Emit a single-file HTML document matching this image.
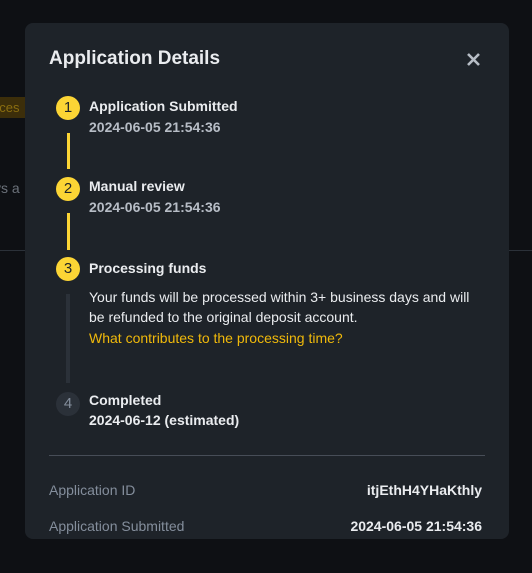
<!DOCTYPE html>
<html><head><style>
*{margin:0;padding:0;box-sizing:border-box}
body{width:532px;height:573px;background:#0e1014;font-family:"Liberation Sans",sans-serif;position:relative;overflow:hidden}
.a{position:absolute}
.m{left:25px;top:23px;width:484px;height:516px;background:#1e2329;border-radius:8px}
.c{width:24px;height:24px;border-radius:50%;background:#fcd535;color:#1e2329;font-size:15px;text-align:center;line-height:24px;left:56px}
.t{left:89px;color:#eaecef;font-size:14px;font-weight:bold}
.d{left:89px;color:#b7bdc6;font-size:14px;font-weight:bold}
.vl{left:67px;width:3px;background:#fcd535}
</style></head><body>
<div class="a" style="left:0;top:97px;width:25px;height:21px;background:#3c2e0a;color:#8a6d10;font-size:13px;line-height:21px;text-indent:-8px;overflow:hidden">oces</div>
<div class="a" style="left:0;top:180px;color:#6b717a;font-size:14px;text-indent:-6px">ys a</div>
<div class="a" style="left:0;top:250px;width:532px;height:1px;background:#2b3139"></div>
<div class="a m"></div>
<div class="a" style="left:49px;top:48px;color:#eaecef;font-size:19px;font-weight:bold">Application Details</div>
<svg class="a" style="left:466px;top:52px" width="15" height="15"><path d="M2 2L13 13M13 2L2 13" stroke="#b7bdc6" stroke-width="2.6"/></svg>
<div class="a c" style="top:96px">1</div>
<div class="a t" style="top:98px">Application Submitted</div>
<div class="a d" style="top:119px">2024-06-05 21:54:36</div>
<div class="a vl" style="top:133px;height:36px"></div>
<div class="a c" style="top:177px">2</div>
<div class="a t" style="top:178px">Manual review</div>
<div class="a d" style="top:199px">2024-06-05 21:54:36</div>
<div class="a vl" style="top:213px;height:37px"></div>
<div class="a c" style="top:257px">3</div>
<div class="a t" style="top:260px">Processing funds</div>
<div class="a" style="left:66px;top:294px;width:4px;height:89px;background:#2b3139"></div>
<div class="a" style="left:89px;top:287px;color:#eaecef;font-size:14px;line-height:20px;width:385px">Your funds will be processed within 3+ business days and will be refunded to the original deposit account.</div>
<div class="a" style="left:89px;top:330px;color:#f0b90b;font-size:14px">What contributes to the processing time?</div>
<div class="a" style="left:56px;top:392px;width:24px;height:24px;border-radius:50%;background:#2b3139;color:#848e9c;font-size:15px;text-align:center;line-height:24px">4</div>
<div class="a t" style="top:392px">Completed</div>
<div class="a t" style="top:412px">2024-06-12 (estimated)</div>
<div class="a" style="left:49px;top:455px;width:436px;height:1px;background:#474d57"></div>
<div class="a" style="left:49px;top:482px;color:#848e9c;font-size:14px">Application ID</div>
<div class="a" style="right:50px;top:482px;color:#eaecef;font-size:14px;font-weight:bold">itjEthH4YHaKthly</div>
<div class="a" style="left:49px;top:518px;color:#848e9c;font-size:14px">Application Submitted</div>
<div class="a" style="right:50px;top:518px;color:#eaecef;font-size:14px;font-weight:bold">2024-06-05 21:54:36</div>
</body></html>
